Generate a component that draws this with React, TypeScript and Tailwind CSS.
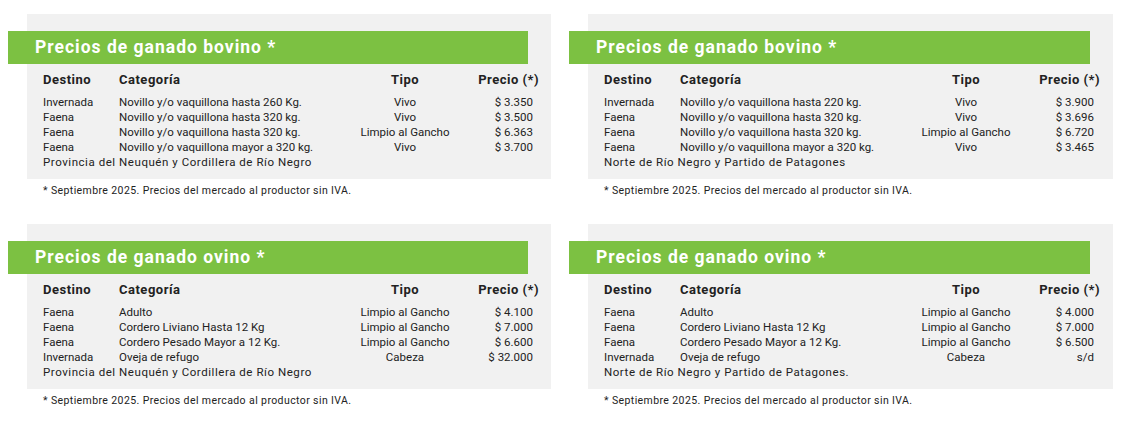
import React from "react";

type Row = [string, string, string, string];

interface CardData {
  title: string;
  rows: Row[];
  region: string;
}

const cards: CardData[] = [
  {
    title: "Precios de ganado bovino *",
    rows: [
      ["Invernada", "Novillo y/o vaquillona hasta 260 Kg.", "Vivo", "$ 3.350"],
      ["Faena", "Novillo y/o vaquillona hasta 320 kg.", "Vivo", "$ 3.500"],
      ["Faena", "Novillo y/o vaquillona hasta 320 kg.", "Limpio al Gancho", "$ 6.363"],
      ["Faena", "Novillo y/o vaquillona mayor a 320 kg.", "Vivo", "$ 3.700"],
    ],
    region: "Provincia del Neuquén y Cordillera de Río Negro",
  },
  {
    title: "Precios de ganado bovino *",
    rows: [
      ["Invernada", "Novillo y/o vaquillona hasta 220 kg.", "Vivo", "$ 3.900"],
      ["Faena", "Novillo y/o vaquillona hasta 320 kg.", "Vivo", "$ 3.696"],
      ["Faena", "Novillo y/o vaquillona hasta 320 kg.", "Limpio al Gancho", "$ 6.720"],
      ["Faena", "Novillo y/o vaquillona mayor a 320 kg.", "Vivo", "$ 3.465"],
    ],
    region: "Norte de Río Negro y Partido de Patagones",
  },
  {
    title: "Precios de ganado ovino *",
    rows: [
      ["Faena", "Adulto", "Limpio al Gancho", "$ 4.100"],
      ["Faena", "Cordero Liviano Hasta 12 Kg", "Limpio al Gancho", "$ 7.000"],
      ["Faena", "Cordero Pesado Mayor a 12 Kg.", "Limpio al Gancho", "$ 6.600"],
      ["Invernada", "Oveja de refugo", "Cabeza", "$ 32.000"],
    ],
    region: "Provincia del Neuquén y Cordillera de Río Negro",
  },
  {
    title: "Precios de ganado ovino *",
    rows: [
      ["Faena", "Adulto", "Limpio al Gancho", "$ 4.000"],
      ["Faena", "Cordero Liviano Hasta 12 Kg", "Limpio al Gancho", "$ 7.000"],
      ["Faena", "Cordero Pesado Mayor a 12 Kg.", "Limpio al Gancho", "$ 6.500"],
      ["Invernada", "Oveja de refugo", "Cabeza", "s/d"],
    ],
    region: "Norte de Río Negro y Partido de Patagones.",
  },
];

function Card({ data }: { data: CardData }) {
  return (
    <div className="flex flex-col">
      <div className="bg-[#f1f1f1] pt-[17px] pb-[9px]">
        <div className="-ml-[19px] mr-[23px] flex h-[33px] items-center bg-[#7cc142] pl-[27px]">
          <span className="text-[17.5px] font-bold leading-none tracking-[1px] text-white">
            {data.title}
          </span>
        </div>
        <div className="mt-[8px] pl-[16px] text-[11.5px] leading-[15px] text-[#222]">
          <div className="flex h-[15px] items-center text-[13px] font-bold tracking-[0.5px]">
            <div className="w-[76px]">Destino</div>
            <div className="w-[226px]">Categoría</div>
            <div className="w-[120px] text-center">Tipo</div>
            <div className="w-[74px] whitespace-nowrap text-right">Precio (*)</div>
          </div>
          <div className="mt-[8px]">
            {data.rows.map((r, i) => (
              <div key={i} className="flex h-[15px] items-center">
                <div className="w-[76px]">{r[0]}</div>
                <div className="w-[226px] whitespace-nowrap">{r[1]}</div>
                <div className="w-[120px] whitespace-nowrap text-center">{r[2]}</div>
                <div className="w-[68px] whitespace-nowrap text-right">{r[3]}</div>
              </div>
            ))}
            <div className="flex h-[15px] items-center whitespace-nowrap tracking-[0.55px]">
              {data.region}
            </div>
          </div>
        </div>
      </div>
      <div className="pl-[16px] pt-[6px] text-[10.5px] leading-[12px] tracking-[0.4px] text-[#222]">
        * Septiembre 2025. Precios del mercado al productor sin IVA.
      </div>
    </div>
  );
}

export default function App() {
  return (
    <div
      className="h-[421px] w-[1128px] bg-white pl-[27px] pt-[14px]"
      style={{ fontFamily: "Roboto, 'Liberation Sans', sans-serif" }}
    >
      <div className="grid grid-cols-[524px_525px] gap-x-[37px] gap-y-[27px]">
        {cards.map((c, i) => (
          <Card key={i} data={c} />
        ))}
      </div>
    </div>
  );
}
